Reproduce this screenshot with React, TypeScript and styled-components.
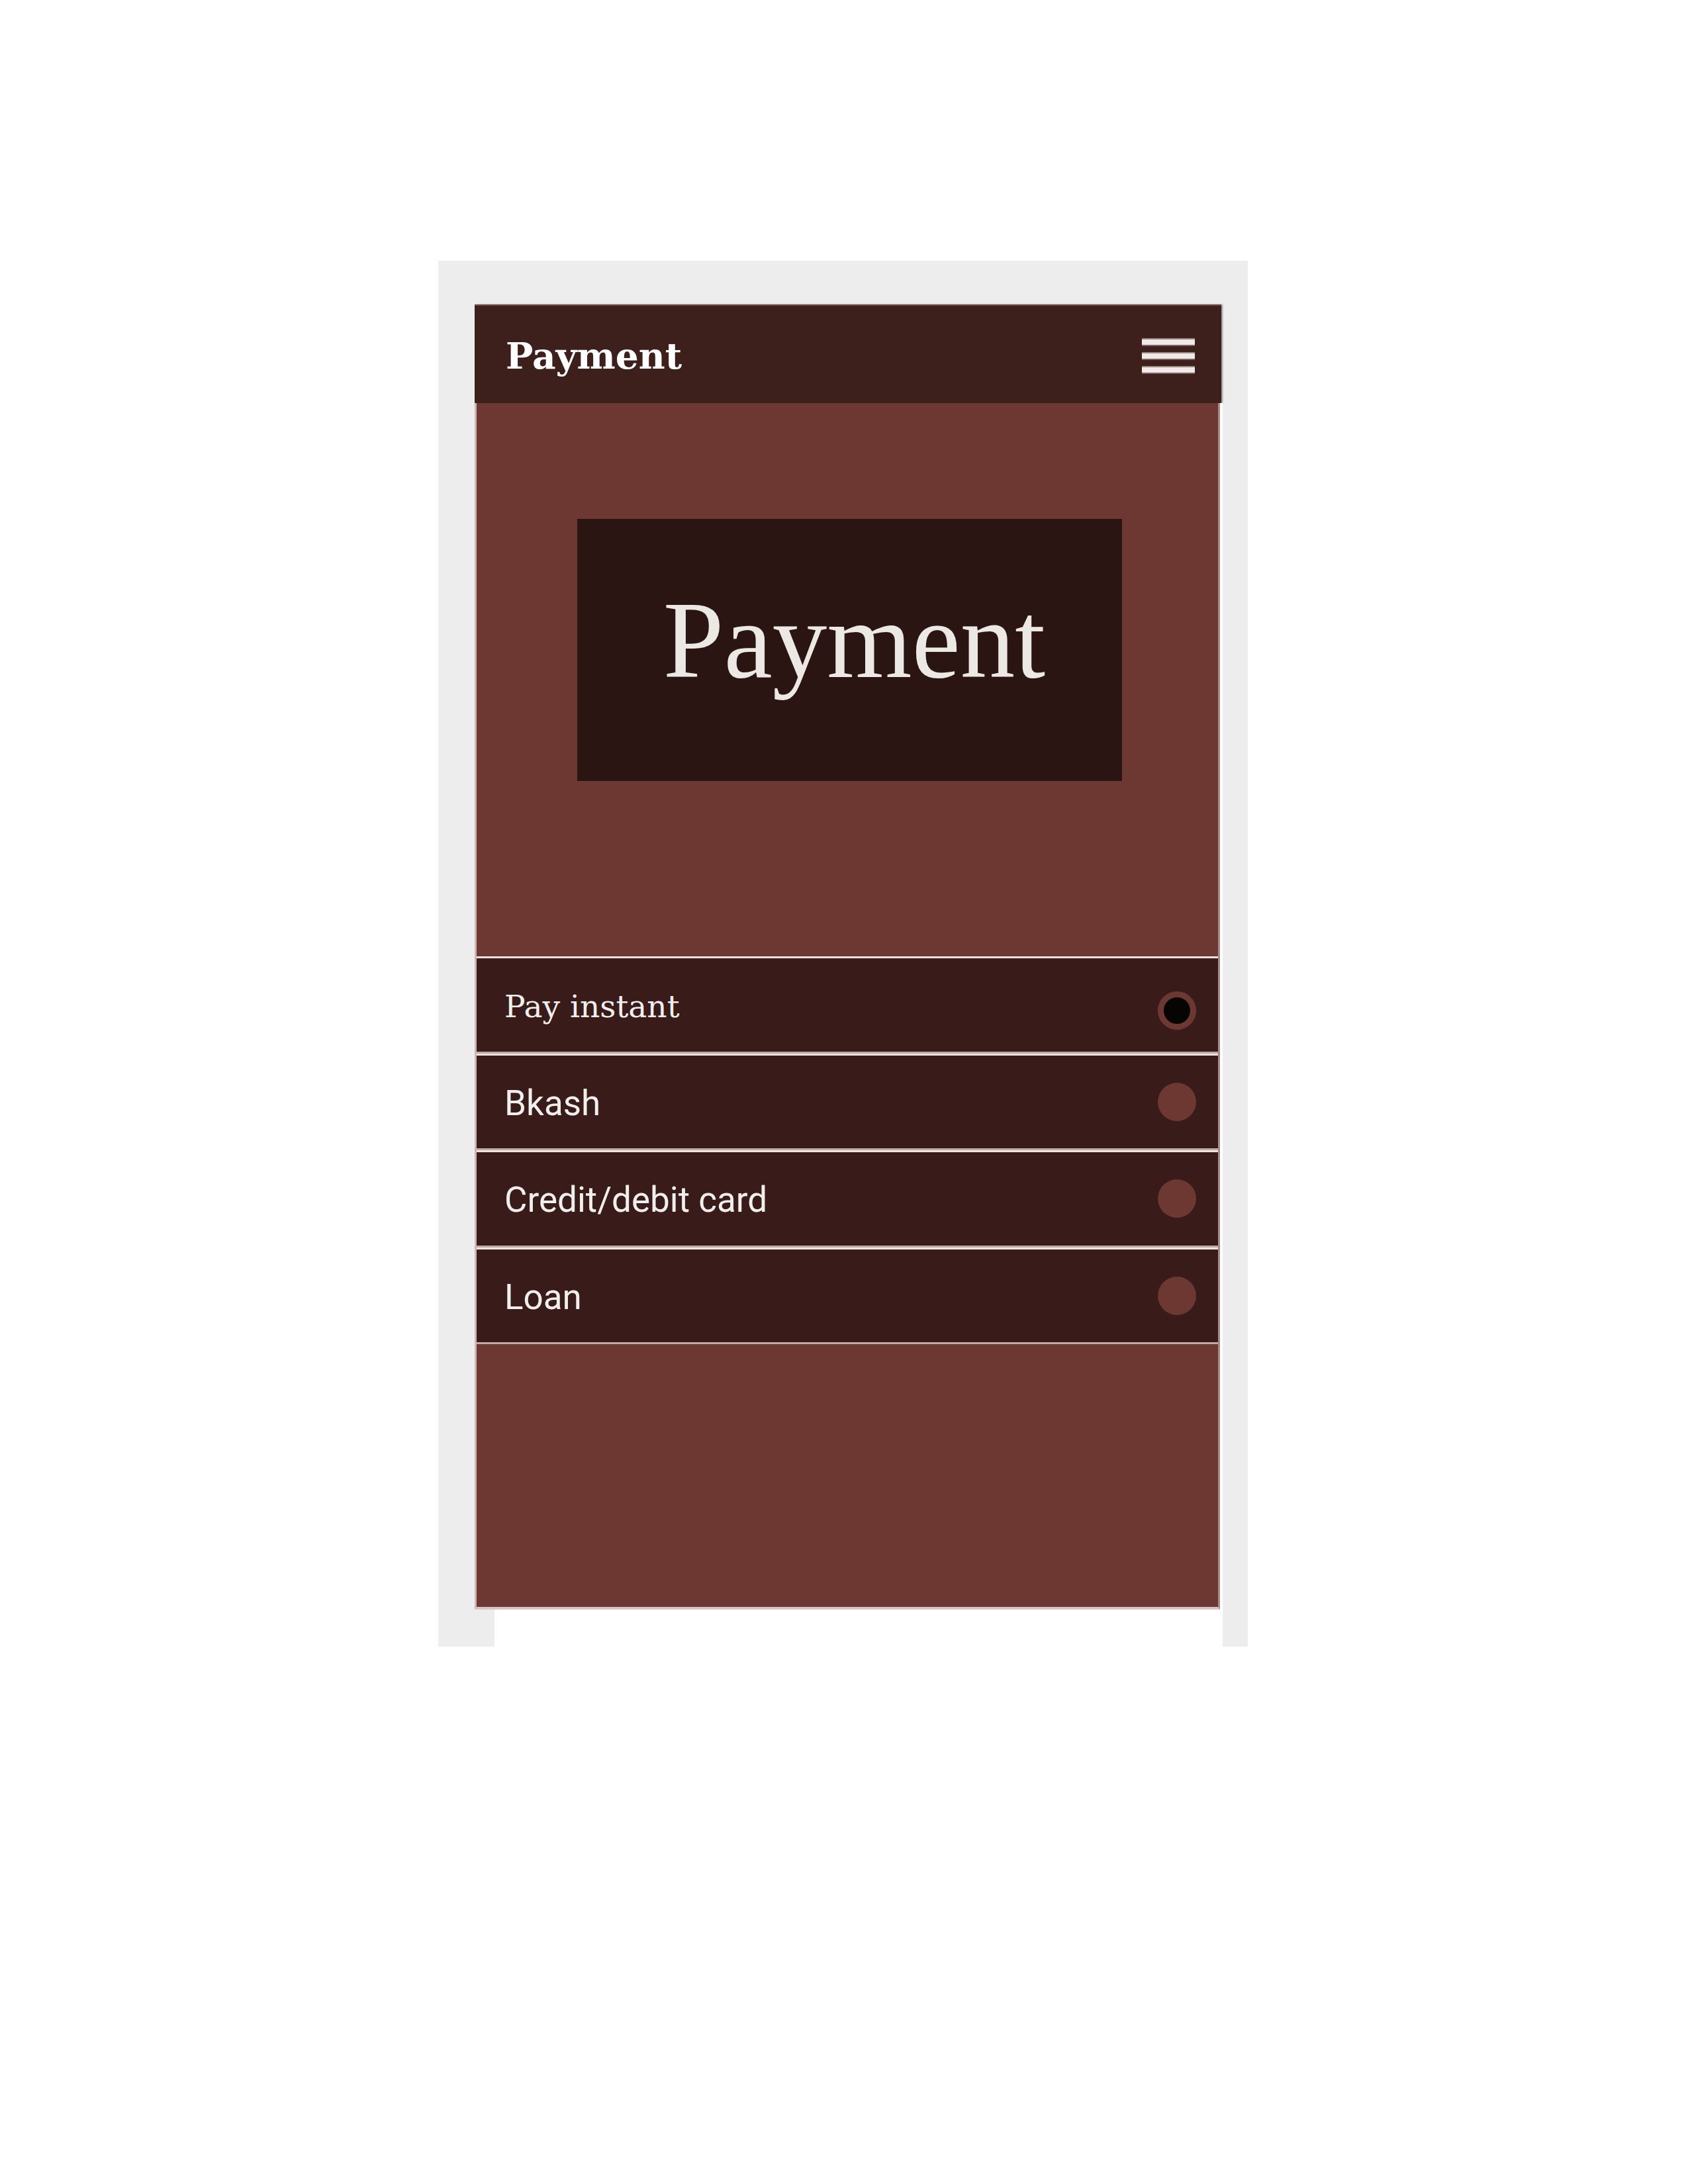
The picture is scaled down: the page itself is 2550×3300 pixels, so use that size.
import styled, { createGlobalStyle } from 'styled-components';

type Method = {
  id: string;
  label: string;
  serif?: boolean;
  checked?: boolean;
};

const methods: Method[] = [
  { id: 'instant', label: 'Pay instant', serif: true, checked: true },
  { id: 'bkash', label: 'Bkash' },
  { id: 'card', label: 'Credit/debit card' },
  { id: 'loan', label: 'Loan' },
];

const GlobalStyle = createGlobalStyle`
  body {
    margin: 0;
    background: #ffffff;
    font-family: 'Roboto', 'Liberation Sans', sans-serif;
  }
  * {
    box-sizing: border-box;
  }
`;

const StyledFrame = styled.div`
  margin: 394px 0 0 662px;
  width: 1223px;
  height: 2094px;
  background-color: #ededed;
  padding: 66px 40px 0 55px;
  display: flex;
  flex-direction: column;
`;

const StyledHeader = styled.header`
  width: 1128px;
  height: 149px;
  background-color: #3d201c;
  border-top: 2px solid #6a4a46;
  box-shadow: 2px 0 2px rgba(60, 30, 26, 0.45);
  display: flex;
  justify-content: space-between;
  align-items: center;
  padding: 4px 40px 0 47px;
`;

const StyledTitle = styled.h1`
  margin: 0;
  font-family: 'DejaVu Serif', 'Liberation Serif', serif;
  font-weight: bold;
  font-size: 55px;
  color: #ffffff;
`;

const StyledBurger = styled.div`
  width: 80px;
  display: flex;
  flex-direction: column;
  gap: 13px;
`;

const StyledBar = styled.span`
  display: block;
  height: 8px;
  background-color: #f1e9e8;
  box-shadow: 0 -2px 0 #9c8885, 0 2px 0 #7a635f;
`;

const StyledSheet = styled.div`
  flex: 1;
  margin-left: 30px;
  width: 1100px;
  background-color: #ffffff;
  padding-bottom: 56px;
`;

const StyledBody = styled.main`
  margin-left: -30px;
  width: 1126px;
  height: 1823px;
  background-color: #6d3831;
  border-left: 3px solid #ccb5b2;
  border-right: 3px solid #a58985;
  border-bottom: 4px solid #d8c5c3;
  display: flex;
  flex-direction: column;
  padding-top: 175px;
`;

const StyledHero = styled.div`
  margin-left: 152px;
  width: 823px;
  height: 396px;
  background-color: #2a1512;
  display: flex;
  justify-content: center;
  align-items: center;
  padding: 0 0 30px 14px;
  font-family: 'Liberation Serif', 'Times New Roman', serif;
  font-size: 165px;
  line-height: 1;
  color: #ece8e4;
`;

const StyledList = styled.ul`
  list-style: none;
  margin: 265px 0 0;
  padding: 0;
`;

const StyledRow = styled.li`
  height: 146.5px;
  background-color: #391c19;
  border-top: 3px solid #efe3e1;
  border-bottom: 3px solid #bcadaa;
  display: flex;
  justify-content: space-between;
  align-items: center;
  padding: 4px 33px 0 42px;
`;

const StyledLabel = styled.label<{ $serif?: boolean }>`
  font-family: ${({ $serif }) =>
    $serif ? "'DejaVu Serif', 'Liberation Serif', serif" : "'Roboto', 'Liberation Sans', sans-serif"};
  font-size: ${({ $serif }) => ($serif ? '47px' : '53px')};
  color: #f1efed;
`;

const StyledRadio = styled.input`
  appearance: none;
  -webkit-appearance: none;
  margin: -4px 0 0;
  width: 58px;
  height: 58px;
  border-radius: 50%;
  background-color: #6d3831;
  cursor: pointer;
  &:checked {
    background-color: #070404;
    border: 9px solid #6d3831;
    margin-top: 14px;
  }
`;

const App = () => {
  return (
    <>
      <GlobalStyle />
      <StyledFrame>
        <StyledHeader>
          <StyledTitle>Payment</StyledTitle>
          <StyledBurger>
            <StyledBar />
            <StyledBar />
            <StyledBar />
          </StyledBurger>
        </StyledHeader>
        <StyledSheet>
          <StyledBody>
            <StyledHero>Payment</StyledHero>
            <StyledList>
              {methods.map((m) => (
                <StyledRow key={m.id}>
                  <StyledLabel $serif={m.serif} htmlFor={m.id}>
                    {m.label}
                  </StyledLabel>
                  <StyledRadio
                    type='radio'
                    name='method'
                    id={m.id}
                    defaultChecked={m.checked}
                  />
                </StyledRow>
              ))}
            </StyledList>
          </StyledBody>
        </StyledSheet>
      </StyledFrame>
    </>
  );
};

export default App;
